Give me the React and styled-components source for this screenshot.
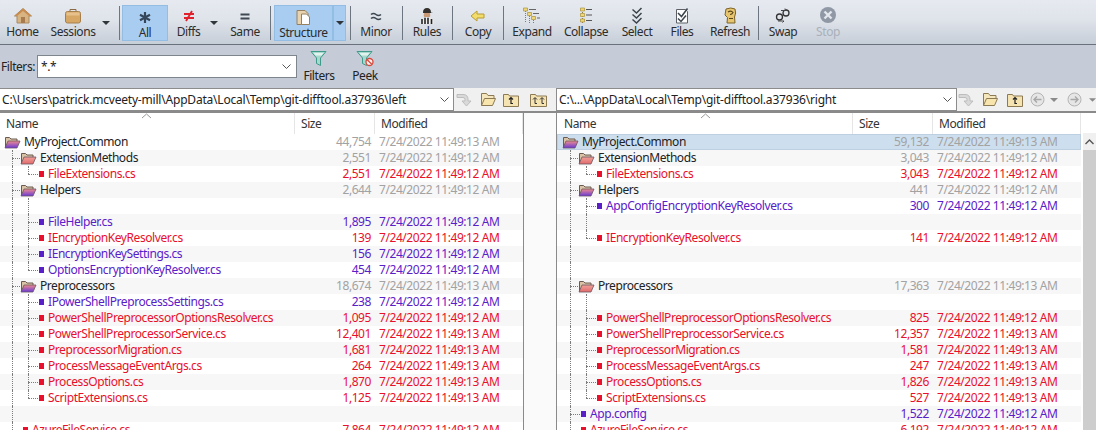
import React from 'react';
import styled, { createGlobalStyle } from 'styled-components';

const GlobalStyle = createGlobalStyle`
    html, body {
        margin: 0;
        padding: 0;
        background: #fff;
    }
    body {
        width: 1096px;
        height: 430px;
        overflow: hidden;
        font-family: 'Noto Sans', 'Open Sans', sans-serif;
        font-size: 12px;
        color: #222;
    }
`;

const RED = '#e8102a';
const PURPLE = '#5a20c8';
const GRAY = '#a2a2a2';

const colors = { red: RED, purple: PURPLE, gray: GRAY };

const Window = styled.div`
    width: 1096px;
    height: 430px;
    display: flex;
    flex-direction: column;
    overflow: hidden;
    letter-spacing: -0.43px;
`;

const Toolbar = styled.div`
    height: 44px;
    flex: none;
    display: flex;
    align-items: flex-start;
    background: linear-gradient(#e6e9f0, #dfe3ea 45%, #c6ced8);
    border-bottom: 1px solid #69727c;
`;

const ToolButton = styled.div`
    width: ${(p) => p.$w}px;
    margin-left: ${(p) => p.$ml}px;
    height: 36px;
    margin-top: 5px;
    box-sizing: border-box;
    flex: none;
    display: flex;
    flex-direction: column;
    align-items: center;
    padding-top: ${(p) => (p.$active ? 2 : 1)}px;
    background: ${(p) => (p.$active ? '#a9cdf0' : 'transparent')};
    box-shadow: ${(p) => (p.$active ? 'inset 0 0 0 1px #94bde4' : 'none')};
    color: ${(p) => (p.$off ? '#a9b0ba' : '#2c2c2c')};
    svg {
        display: block;
        flex: none;
    }
`;

const ToolLabel = styled.span`
    display: block;
    line-height: 16px;
    white-space: nowrap;
`;

const ArrowButton = styled.div`
    width: ${(p) => p.$w}px;
    margin-left: ${(p) => p.$ml}px;
    height: 36px;
    margin-top: 5px;
    flex: none;
    display: flex;
    align-items: flex-start;
    justify-content: center;
    padding-top: 16px;
    box-sizing: border-box;
    background: ${(p) => (p.$active ? '#a9cdf0' : 'transparent')};
    box-shadow: ${(p) => (p.$active ? 'inset 0 0 0 1px #94bde4' : 'none')};
    &::after {
        content: '';
        border-left: 4px solid transparent;
        border-right: 4px solid transparent;
        border-top: 4px solid #30353a;
    }
`;

const ToolSep = styled.div`
    width: 1px;
    height: 34px;
    margin-top: 6px;
    margin-left: ${(p) => p.$ml}px;
    flex: none;
    background: #6d7680;
`;

const FilterBar = styled.div`
    height: 43px;
    flex: none;
    display: flex;
    align-items: flex-start;
    background: #c5ccd7;
`;

const FilterLabel = styled.span`
    width: 37px;
    flex: none;
    padding-left: 1px;
    box-sizing: border-box;
    line-height: 16px;
    margin-top: 14px;
`;

const FilterInput = styled.div`
    width: 260px;
    height: 23px;
    margin-top: 10px;
    flex: none;
    box-sizing: border-box;
    display: flex;
    align-items: center;
    justify-content: space-between;
    padding: 0 5px 0 3px;
    background: #fff;
    border: 1px solid #7f858c;
`;

const FilterButton = styled.div`
    width: ${(p) => p.$w}px;
    margin-left: ${(p) => p.$ml}px;
    margin-top: 5px;
    flex: none;
    display: flex;
    flex-direction: column;
    align-items: center;
    svg {
        display: block;
    }
`;

const PathBar = styled.div`
    height: 23px;
    flex: none;
    display: flex;
    align-items: center;
    background: #f0f0f0;
`;

const PathInput = styled.div`
    width: ${(p) => p.$w}px;
    height: 23px;
    flex: none;
    box-sizing: border-box;
    display: flex;
    align-items: center;
    justify-content: space-between;
    padding: 0 4px 0 ${(p) => p.$pad}px;
    background: #fff;
    border: 1px solid #8c8c8c;
    border-left-width: ${(p) => (p.$first ? 0 : 1)}px;
    white-space: nowrap;
    letter-spacing: -0.2px;
`;

const PathIcon = styled.div`
    width: ${(p) => p.$w}px;
    flex: none;
    display: flex;
    justify-content: center;
    svg {
        display: block;
    }
`;

const Panes = styled.div`
    flex: 1;
    display: flex;
    border-top: 2px solid #8a8a8a;
    min-height: 0;
`;

const Pane = styled.div`
    width: ${(p) => p.$w}px;
    flex: none;
    overflow: hidden;
    background: #fff;
`;

const Gap = styled.div`
    width: 32px;
    flex: none;
    background: #fafafa;
    border-left: 1px solid #8a8a8a;
    border-right: 1px solid #8a8a8a;
`;

const Header = styled.div`
    height: 21px;
    display: grid;
    grid-template-columns: ${(p) => p.$name}px 80px 148px;
    position: relative;
`;

const HeaderCell = styled.div`
    padding-left: ${(p) => p.$pad}px;
    line-height: 21px;
    box-sizing: border-box;
    border-right: 1px solid #e5e5e5;
    color: #333;
`;

const SortCaret = styled.svg`
    position: absolute;
    left: ${(p) => p.$x}px;
    top: 0;
`;

const Row = styled.div`
    height: 16px;
    box-sizing: border-box;
    display: grid;
    grid-template-columns: ${(p) => p.$name}px 76px 152px;
    width: ${(p) => p.$name + 228}px;
    line-height: 16px;
    background: ${(p) => (p.$selected ? '#cddfee' : p.$odd ? '#f7f7f8' : '#fff')};
    box-shadow: ${(p) => (p.$selected ? 'inset 0 0 0 1px #bcd0e2' : 'none')};
`;

const NameCell = styled.div`
    display: flex;
    align-items: center;
    padding-left: ${(p) => p.$pad}px;
    white-space: nowrap;
    color: ${(p) => (p.$tone ? colors[p.$tone] : '#222')};
    svg {
        display: block;
        flex: none;
    }
`;

const SizeCell = styled.div`
    text-align: right;
    color: ${(p) => colors[p.$tone]};
`;

const DateCell = styled.div`
    padding-left: 8px;
    white-space: nowrap;
    color: ${(p) => colors[p.$tone]};
`;

// one 16px indent column of the tree, with its dotted guide
const Guide = styled.span`
    width: 16px;
    height: 16px;
    flex: none;
    position: relative;
    &::before {
        content: '';
        display: block;
        position: absolute;
        left: 8px;
        top: 0;
        height: ${(p) => (p.$kind === 'end' ? 8 : 16)}px;
        border-left: 1px dotted #7c7c7c;
    }
    &::after {
        content: '';
        display: ${(p) => (p.$kind === 'end' || p.$kind === 'tee' ? 'block' : 'none')};
        position: absolute;
        left: 8px;
        top: 8px;
        width: ${(p) => (p.$file ? 10 : 8)}px;
        border-top: 1px dotted #7c7c7c;
    }
`;

const FileMark = styled.span`
    width: 5px;
    height: 6px;
    margin: 0 4px 0 3px;
    flex: none;
    background: ${(p) => colors[p.$tone]};
`;

const FolderGap = styled.span`
    width: 3px;
    flex: none;
`;

const Scrollbar = styled.div`
    width: 13px;
    margin-left: 2px;
    margin-top: 20px;
    flex: none;
    background: #cdcdcd;
`;

const ScrollUp = styled.div`
    height: 17px;
    background: #f0f0f0;
    display: flex;
    align-items: center;
    justify-content: center;
`;

const Chevron = () => (
    <svg width="9" height="5" viewBox="0 0 9 5">
        <path d="M.5.5l4 4 4-4" fill="none" stroke="#555" />
    </svg>
);

const Folder = ({ variant }) => (
    <svg width="17" height="14" viewBox="0 0 17 14">
        <defs>
            <linearGradient id="fmix" x1="0" y1="0" x2="0" y2="1">
                <stop offset="0" stopColor="#ee8c8c" />
                <stop offset="1" stopColor="#6a38d8" />
            </linearGradient>
            <linearGradient id="fred" x1="0" y1="0" x2="0" y2="1">
                <stop offset="0" stopColor="#f0a09a" />
                <stop offset="1" stopColor="#e26a6a" />
            </linearGradient>
        </defs>
        <path d="M1.500 12.500V2.500h4l1.500 1.500h6v2" fill="#d9c3a6" stroke="#6b5a50" />
        <path
            d="M1 13l3-7h12l-3 7z"
            fill={variant === 'red' ? 'url(#fred)' : 'url(#fmix)'}
            stroke="#6a5560"
            strokeWidth=".8"
        />
    </svg>
);

const TreeRow = ({ row, index, name, pad }) => {
    const guides = row.guides || [];
    const isFile = row.tone && row.tone !== 'gray';
    return (
        <Row $name={name} $odd={index % 2 === 1} $selected={row.selected}>
            <NameCell $pad={pad} $tone={isFile ? row.tone : null}>
                {guides.map((kind, i) => (
                    <Guide key={i} $kind={kind} $file={isFile} />
                ))}
                {row.folder && (
                    <>
                        <Folder variant={row.folder} />
                        <FolderGap />
                    </>
                )}
                {isFile && <FileMark $tone={row.tone} />}
                {row.label}
            </NameCell>
            {row.size && <SizeCell $tone={row.tone || 'gray'}>{row.size}</SizeCell>}
            {row.date && (
                <DateCell $tone={row.tone || 'gray'}>7/24/2022 11:49:{row.date} AM</DateCell>
            )}
        </Row>
    );
};

const leftRows = [
    { label: 'MyProject.Common', folder: 'mix', size: '44,754', date: '13' },
    { label: 'ExtensionMethods', folder: 'red', size: '2,551', date: '12', guides: ['tee'] },
    { label: 'FileExtensions.cs', tone: 'red', size: '2,551', date: '12', guides: ['pipe', 'end'] },
    { label: 'Helpers', folder: 'mix', size: '2,644', date: '12', guides: ['tee'] },
    { guides: ['pipe', 'pipe'] },
    { label: 'FileHelper.cs', tone: 'purple', size: '1,895', date: '12', guides: ['pipe', 'tee'] },
    { label: 'IEncryptionKeyResolver.cs', tone: 'red', size: '139', date: '12', guides: ['pipe', 'tee'] },
    { label: 'IEncryptionKeySettings.cs', tone: 'purple', size: '156', date: '12', guides: ['pipe', 'tee'] },
    { label: 'OptionsEncryptionKeyResolver.cs', tone: 'purple', size: '454', date: '12', guides: ['pipe', 'end'] },
    { label: 'Preprocessors', folder: 'mix', size: '18,674', date: '13', guides: ['tee'] },
    { label: 'IPowerShellPreprocessSettings.cs', tone: 'purple', size: '238', date: '12', guides: ['pipe', 'tee'] },
    { label: 'PowerShellPreprocessorOptionsResolver.cs', tone: 'red', size: '1,095', date: '12', guides: ['pipe', 'tee'] },
    { label: 'PowerShellPreprocessorService.cs', tone: 'red', size: '12,401', date: '13', guides: ['pipe', 'tee'] },
    { label: 'PreprocessorMigration.cs', tone: 'red', size: '1,681', date: '13', guides: ['pipe', 'tee'] },
    { label: 'ProcessMessageEventArgs.cs', tone: 'red', size: '264', date: '13', guides: ['pipe', 'tee'] },
    { label: 'ProcessOptions.cs', tone: 'red', size: '1,870', date: '13', guides: ['pipe', 'tee'] },
    { label: 'ScriptExtensions.cs', tone: 'red', size: '1,125', date: '13', guides: ['pipe', 'end'] },
    { guides: ['pipe'] },
    { label: 'AzureFileService.cs', tone: 'red', size: '7,864', date: '12', guides: ['tee'] },
];

const rightRows = [
    { label: 'MyProject.Common', folder: 'mix', size: '59,132', date: '13', selected: true },
    { label: 'ExtensionMethods', folder: 'red', size: '3,043', date: '12', guides: ['tee'] },
    { label: 'FileExtensions.cs', tone: 'red', size: '3,043', date: '12', guides: ['pipe', 'end'] },
    { label: 'Helpers', folder: 'mix', size: '441', date: '12', guides: ['tee'] },
    { label: 'AppConfigEncryptionKeyResolver.cs', tone: 'purple', size: '300', date: '12', guides: ['pipe', 'tee'] },
    { guides: ['pipe', 'pipe'] },
    { label: 'IEncryptionKeyResolver.cs', tone: 'red', size: '141', date: '12', guides: ['pipe', 'end'] },
    { guides: ['pipe'] },
    { guides: ['pipe'] },
    { label: 'Preprocessors', folder: 'red', size: '17,363', date: '13', guides: ['tee'] },
    { guides: ['pipe', 'pipe'] },
    { label: 'PowerShellPreprocessorOptionsResolver.cs', tone: 'red', size: '825', date: '12', guides: ['pipe', 'tee'] },
    { label: 'PowerShellPreprocessorService.cs', tone: 'red', size: '12,357', date: '13', guides: ['pipe', 'tee'] },
    { label: 'PreprocessorMigration.cs', tone: 'red', size: '1,581', date: '13', guides: ['pipe', 'tee'] },
    { label: 'ProcessMessageEventArgs.cs', tone: 'red', size: '247', date: '13', guides: ['pipe', 'tee'] },
    { label: 'ProcessOptions.cs', tone: 'red', size: '1,826', date: '13', guides: ['pipe', 'tee'] },
    { label: 'ScriptExtensions.cs', tone: 'red', size: '527', date: '13', guides: ['pipe', 'end'] },
    { label: 'App.config', tone: 'purple', size: '1,522', date: '12', guides: ['tee'] },
    { label: 'AzureFileService.cs', tone: 'red', size: '6,192', date: '12', guides: ['tee'] },
];

const Ico = ({ children }) => (
    <svg width="20" height="18" viewBox="0 0 20 18">
        {children}
    </svg>
);

const icons = {
    home: (
        <Ico>
            <path d="M10 2.500L18.500 10H16v7H4v-7H1.500z" fill="#d8b483" stroke="#a98a63" />
            <path d="M10 2.500L18.500 10H16L10 5 4 10H1.500z" fill="#c98b4e" />
            <rect x="8" y="11" width="4" height="6" fill="#a87c4e" />
        </Ico>
    ),
    sessions: (
        <Ico>
            <path d="M7 5.500V3.500h6v2" fill="none" stroke="#8a6a45" />
            <rect x="2.500" y="5.500" width="15" height="11.500" rx="2" fill="#d7a765" stroke="#a67f4c" />
            <rect x="3.500" y="6.500" width="13" height="3" fill="#e6c18c" />
        </Ico>
    ),
    all: (
        <Ico>
            <path d="M10 5v11M5 7.800l10 5.400M15 7.800L5 13.200" stroke="#35455a" strokeWidth="2.200" />
        </Ico>
    ),
    diffs: (
        <Ico>
            <path d="M5 8h10M5 12h10" stroke="#e0202c" strokeWidth="2" />
            <path d="M13 5l-6 10" stroke="#e0202c" strokeWidth="1.800" />
        </Ico>
    ),
    same: (
        <Ico>
            <path d="M5.500 8.500h9M5.500 12.500h9" stroke="#3e4852" strokeWidth="2" />
        </Ico>
    ),
    structure: (
        <Ico>
            <path d="M3 3.500h8l3 3v11H3z" fill="#e8d3ae" stroke="#94805f" />
            <path d="M7.500 7h5l3 3v7.500h-8z" fill="#fff" stroke="#94805f" />
        </Ico>
    ),
    minor: (
        <Ico>
            <path
                d="M5 8.500q2.500-2 5 0t5 0M5 12.500q2.500-2 5 0t5 0"
                fill="none"
                stroke="#3e4852"
                strokeWidth="1.600"
            />
        </Ico>
    ),
    rules: (
        <Ico>
            <path d="M6 6.500q0-4.500 4-4.500t4 4.500l2 .5H6z" fill="#33302e" />
            <rect x="6.800" y="7" width="6.400" height="4" rx="1" fill="#c99a76" />
            <path d="M3.500 18v-3q1-3.500 6.500-3.500t6.500 3.500v3z" fill="#eee" />
            <path d="M5 13v5M8 11.800V18M11 11.800V18M14.500 13v5" stroke="#222" strokeWidth="1.600" />
        </Ico>
    ),
    copy: (
        <Ico>
            <path d="M3 10l6-5v3h7v4H9v3z" fill="#f2dc6a" stroke="#b89c38" />
        </Ico>
    ),
    expand: (
        <Ico>
            <path d="M3.500 3v14M7.500 8v9M11.500 12v5" stroke="#8a7d50" strokeDasharray="1 1" fill="none" />
            <path d="M1.500 2h4v3h-4zM5.500 6.500h4v3h-4zM9.500 10.500h4v3h-4z" fill="#efd779" stroke="#ab9238" strokeWidth=".7" />
            <path d="M7 3.500h7M11 7.500h6M15 12h3" stroke="#666" />
        </Ico>
    ),
    collapse: (
        <Ico>
            <path d="M6.500 2v15" stroke="#8a7d50" strokeDasharray="1 1" />
            <path d="M4.500 2h4v3h-4zM4.500 7.500h4v3h-4zM4.500 13h4v3h-4z" fill="#efd779" stroke="#ab9238" strokeWidth=".7" />
            <path d="M10 3.500h6M10 9h6M10 14.500h6" stroke="#555" />
        </Ico>
    ),
    select: (
        <Ico>
            <path d="M5.500 3.500l4 3.500 5-5M5.500 8.500l4 3.500 5-5M5.500 13.500l4 3.500 5-5" fill="none" stroke="#3c444c" strokeWidth="1.500" />
        </Ico>
    ),
    files: (
        <Ico>
            <path d="M4.500 3.500h9l2 2v11.500h-11z" fill="#fdfdfd" stroke="#5c6066" />
            <path d="M6 7l3.500 3.500 6-8M6 12.500l3 3 5-6" fill="none" stroke="#3c444c" strokeWidth="1.500" />
        </Ico>
    ),
    refresh: (
        <Ico>
            <path d="M6 3q5-2 9 0 1.500 4-.5 8l.5 6H7l.5-5.500L5 9z" fill="#e6c56e" stroke="#7b6228" />
            <path d="M8 6q3-2 5 .5-1 2-3 2M9 12.500h4" fill="none" stroke="#5a4618" strokeWidth="1.200" />
        </Ico>
    ),
    swap: (
        <Ico>
            <circle cx="6.500" cy="11" r="3" fill="none" stroke="#333" strokeWidth="1.300" />
            <circle cx="13" cy="7" r="3" fill="none" stroke="#333" strokeWidth="1.300" />
            <path d="M8 4.500h6l-2-2M5 15h6l-1.500 1.500" fill="none" stroke="#444" />
        </Ico>
    ),
    stop: (
        <Ico>
            <circle cx="10" cy="9" r="8" fill="#8f98a4" />
            <path d="M6.500 5.500l7 7M13.500 5.500l-7 7" stroke="#e4e7ec" strokeWidth="2.400" />
        </Ico>
    ),
};

const toolItems = [
    { label: 'Home', icon: 'home', w: 37, ml: 4 },
    { label: 'Sessions', icon: 'sessions', w: 50, ml: 7 },
    { arrow: true, w: 12, ml: 2 },
    { sep: true, ml: 7 },
    { label: 'All', icon: 'all', w: 46, ml: 2, active: true },
    { label: 'Diffs', icon: 'diffs', w: 37, ml: 2 },
    { arrow: true, w: 12, ml: 1 },
    { label: 'Same', icon: 'same', w: 36, ml: 7 },
    { sep: true, ml: 7 },
    { label: 'Structure', icon: 'structure', w: 59, ml: 3, active: true },
    { arrow: true, w: 13, ml: 0, active: true },
    { sep: true, ml: 4 },
    { label: 'Minor', icon: 'minor', w: 40, ml: 5 },
    { sep: true, ml: 6 },
    { label: 'Rules', icon: 'rules', w: 38, ml: 5 },
    { sep: true, ml: 6 },
    { label: 'Copy', icon: 'copy', w: 40, ml: 5 },
    { sep: true, ml: 5 },
    { label: 'Expand', icon: 'expand', w: 48, ml: 4 },
    { label: 'Collapse', icon: 'collapse', w: 52, ml: 4 },
    { label: 'Select', icon: 'select', w: 42, ml: 4 },
    { label: 'Files', icon: 'files', w: 40, ml: 4 },
    { label: 'Refresh', icon: 'refresh', w: 48, ml: 4 },
    { sep: true, ml: 4 },
    { label: 'Swap', icon: 'swap', w: 38, ml: 5 },
    { label: 'Stop', icon: 'stop', w: 36, ml: 8, off: true },
];

const Funnel = ({ peek }) => (
    <svg width="20" height="17" viewBox="0 0 20 17">
        <path d="M2 1.500h15l-5.500 6.500v7.500l-4-2V8z" fill="#a8d8cc" stroke="#3f9a8c" />
        <path d="M4.500 3h10l-2 2.500h-6z" fill="#e2f3ee" />
        {peek && (
            <g>
                <circle cx="14.500" cy="12" r="3.500" fill="#f4f4f4" stroke="#d8483c" strokeWidth="1.300" />
                <path d="M12 9.500l5 5" stroke="#d8483c" strokeWidth="1.200" />
            </g>
        )}
    </svg>
);

const SkipArrow = () => (
    <svg width="18" height="18" viewBox="0 0 18 18">
        <path
            d="M2 3.500h6q5 0 5 5V10h3l-4.500 5L7 10h3V8.500q0-2-2-2H2z"
            fill="#d9d9d9"
            stroke="#bdbdbd"
        />
    </svg>
);

const OpenFolder = () => (
    <svg width="17" height="15" viewBox="0 0 17 15">
        <path d="M1.500 13.500V1.500h5l1.500 2h6v3" fill="#f6e6bd" stroke="#8c7a55" />
        <path d="M1.500 13.500l3-7h11l-3 7z" fill="#f8e4ad" stroke="#8c7a55" />
    </svg>
);

const UpFolder = ({ double }) => (
    <svg width={double ? 17 : 16} height="15" viewBox={double ? '0 0 17 15' : '0 0 16 15'}>
        <path
            d={double ? 'M.5 2.500h5l1 1.500h10v10.500H.5z' : 'M.5 2.500h5l1 1.500h9v10.500H.5z'}
            fill="#f6e3b2"
            stroke="#8c7a55"
        />
        {double ? (
            <path d="M3 7.500l2-2 2 2M5 6v5.500h2M10 7.500l2-2 2 2M12 6v5.500h2" fill="none" stroke="#333" />
        ) : (
            <path d="M6 7.500l2-2 2 2M8 6v5.500h2" fill="none" stroke="#222" strokeWidth="1.200" />
        )}
    </svg>
);

const RoundArrow = ({ right }) => (
    <svg width="15" height="15" viewBox="0 0 15 15">
        <circle cx="7.500" cy="7.500" r="6.500" fill="#e6e6e6" stroke="#b4b4b4" />
        <path
            d={right ? 'M3.500 7.500h7M8 4.500l3 3-3 3' : 'M11.500 7.500h-7M7 4.500l-3 3 3 3'}
            fill="none"
            stroke="#a8a8a8"
            strokeWidth="1.400"
        />
    </svg>
);

const SmallDrop = () => (
    <svg width="8" height="4" viewBox="0 0 8 4">
        <path d="M0 0h8L4 4z" fill="#8a8a8a" />
    </svg>
);

const Caret = ({ x }) => (
    <SortCaret $x={x} width="11" height="6" viewBox="0 0 11 6">
        <path d="M1 5l4.500-4L10 5" fill="none" stroke="#999" />
    </SortCaret>
);

const TreePane = ({ rows, w, name, pad, caret }) => (
    <Pane $w={w}>
        <Header $name={name}>
            <HeaderCell $pad={pad}>Name</HeaderCell>
            <HeaderCell $pad={6}>Size</HeaderCell>
            <HeaderCell $pad={6}>Modified</HeaderCell>
            <Caret x={caret} />
        </Header>
        {rows.map((row, i) => (
            <TreeRow key={i} row={row} index={i} name={name} pad={pad === 6 ? 4 : 5} />
        ))}
    </Pane>
);

const App = () => (
    <Window>
        <GlobalStyle />
        <Toolbar>
            {toolItems.map((item, i) => {
                if (item.sep) return <ToolSep key={i} $ml={item.ml} />;
                if (item.arrow) {
                    return <ArrowButton key={i} $w={item.w} $ml={item.ml} $active={item.active} />;
                }
                return (
                    <ToolButton
                        key={i}
                        $w={item.w}
                        $ml={item.ml}
                        $active={item.active}
                        $off={item.off}
                    >
                        {icons[item.icon]}
                        <ToolLabel>{item.label}</ToolLabel>
                    </ToolButton>
                );
            })}
        </Toolbar>
        <FilterBar>
            <FilterLabel>Filters:</FilterLabel>
            <FilterInput>
                *.*
                <Chevron />
            </FilterInput>
            <FilterButton $w={44} $ml={0}>
                <Funnel />
                <span>Filters</span>
            </FilterButton>
            <FilterButton $w={40} $ml={4}>
                <Funnel peek />
                <span>Peek</span>
            </FilterButton>
        </FilterBar>
        <PathBar>
            <PathInput $w={454} $pad={2} $first>
                C:\Users\patrick.mcveety-mill\AppData\Local\Temp\git-difftool.a37936\left
                <Chevron />
            </PathInput>
            <PathIcon $w={20}>
                <SkipArrow />
            </PathIcon>
            <PathIcon $w={28}>
                <OpenFolder />
            </PathIcon>
            <PathIcon $w={18}>
                <UpFolder />
            </PathIcon>
            <PathIcon $w={36}>
                <UpFolder double />
            </PathIcon>
            <PathInput $w={401} $pad={2}>
                C:\...\AppData\Local\Temp\git-difftool.a37936\right
                <Chevron />
            </PathInput>
            <PathIcon $w={18}>
                <SkipArrow />
            </PathIcon>
            <PathIcon $w={30}>
                <OpenFolder />
            </PathIcon>
            <PathIcon $w={20}>
                <UpFolder />
            </PathIcon>
            <PathIcon $w={24}>
                <RoundArrow />
            </PathIcon>
            <PathIcon $w={10}>
                <SmallDrop />
            </PathIcon>
            <PathIcon $w={30}>
                <RoundArrow right />
            </PathIcon>
            <PathIcon $w={7}>
                <SmallDrop />
            </PathIcon>
        </PathBar>
        <Panes>
            <TreePane rows={leftRows} w={523} name={295} pad={6} caret={141} />
            <Gap />
            <TreePane rows={rightRows} w={524} name={296} pad={7} caret={143} />
            <Scrollbar>
                <ScrollUp>
                    <svg width="9" height="6" viewBox="0 0 9 6">
                        <path d="M.5 5l4-4 4 4" fill="none" stroke="#555" strokeWidth="1.400" />
                    </svg>
                </ScrollUp>
            </Scrollbar>
        </Panes>
    </Window>
);

export default App;
